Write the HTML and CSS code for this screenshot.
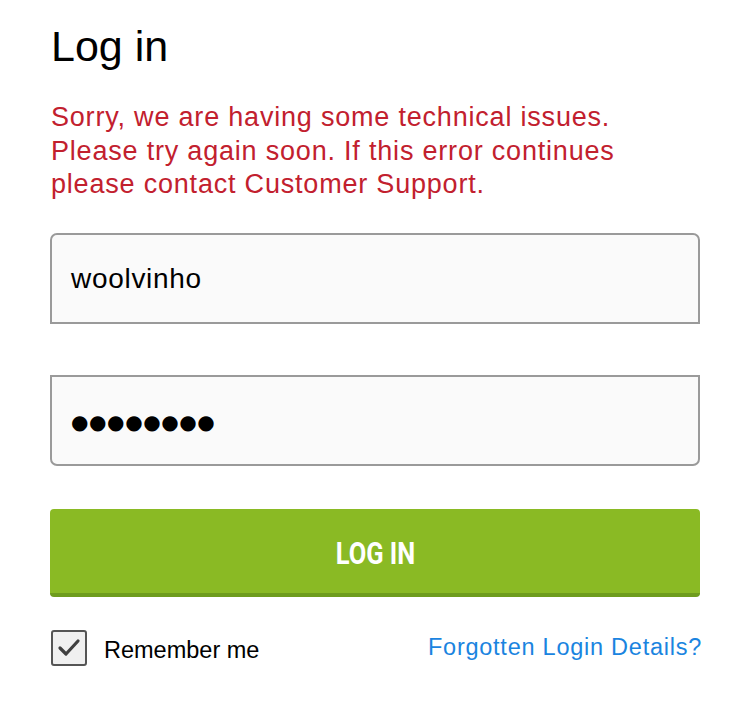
FILE: index.html
```html
<!DOCTYPE html>
<html lang="en">
<head>
<meta charset="utf-8">
<title>Log in</title>
<link rel="stylesheet" href="styles.css">
</head>
<body>
<main class="login">
  <h1 class="title">Log in</h1>
  <p class="error">Sorry, we are having some technical issues.<br>Please try again soon. If this error continues<br>please contact Customer Support.</p>
  <div class="field field-top"><span class="value">woolvinho</span></div>
  <div class="field field-bottom"><span class="dots">●●●●●●●●</span></div>
  <button class="btn" type="button"><span class="btn-label">LOG IN</span></button>
  <div class="row">
    <label class="remember">
      <span class="check">
        <svg width="24" height="20" viewBox="0 0 24 20"><polyline points="3,10 9,16 21,3" fill="none" stroke="#3f3f3f" stroke-width="3.2" stroke-linecap="round" stroke-linejoin="round"/></svg>
      </span>
      <span class="remember-text">Remember me</span>
    </label>
    <a class="forgot" href="#">Forgotten Login Details?</a>
  </div>
</main>
</body>
</html>
```
FILE: styles.css
```css
html, body {
  margin: 0;
  padding: 0;
  background: #ffffff;
}
body {
  font-family: "Liberation Sans", Arial, sans-serif;
  color: #000;
}
.login {
  padding: 21px 50px 0 50px;
  display: flex;
  flex-direction: column;
}
.title {
  margin: 0 0 0 1px;
  font-size: 43px;
  line-height: 50px;
  font-weight: 400;
}
.error {
  margin: 30px 0 0 1px;
  font-size: 27px;
  line-height: 33.5px;
  letter-spacing: 0.8px;
  color: #c2202e;
}
.field {
  box-sizing: border-box;
  height: 91px;
  border: 2px solid #9a9a9a;
  background: #fafafa;
  display: flex;
  align-items: center;
  padding-left: 19px;
}
.field-top {
  margin-top: 31.5px;
  border-radius: 7px 7px 0 0;
}
.field-bottom {
  margin-top: 51px;
  border-radius: 0 0 7px 7px;
}
.value {
  font-size: 28px;
  letter-spacing: 0.7px;
  padding-top: 1px;
}
.dots {
  font-family: "DejaVu Sans", sans-serif;
  font-size: 20px;
  letter-spacing: 0.6px;
  line-height: 1;
  padding-left: 0;
  padding-top: 2px;
}
.btn {
  margin-top: 43px;
  height: 88px;
  border: 0;
  border-bottom: 4px solid #6e9c1d;
  border-radius: 4px;
  background: #8aba24;
  color: #fff;
  display: flex;
  align-items: center;
  justify-content: center;
  padding: 4px 0 0 0;
  cursor: pointer;
}
.btn-label {
  font-family: "Roboto", "Liberation Sans", sans-serif;
  font-weight: 700;
  font-size: 31px;
  display: inline-block;
  transform: scaleX(0.82);
}
.row {
  margin-top: 33px;
  display: flex;
  align-items: center;
  justify-content: space-between;
}
.remember {
  display: flex;
  align-items: center;
  gap: 17px;
}
.check {
  box-sizing: border-box;
  width: 36px;
  height: 36px;
  border: 2px solid #555;
  border-radius: 3px;
  background: #f0f0f0;
  display: flex;
  align-items: center;
  justify-content: center;
  margin-left: 1px;
}
.remember-text {
  font-size: 23.5px;
  padding-top: 4px;
}
.forgot {
  font-size: 23.5px;
  letter-spacing: 0.75px;
  color: #1a84e0;
  text-decoration: none;
  margin-right: -2px;
  padding-bottom: 2px;
}
```
